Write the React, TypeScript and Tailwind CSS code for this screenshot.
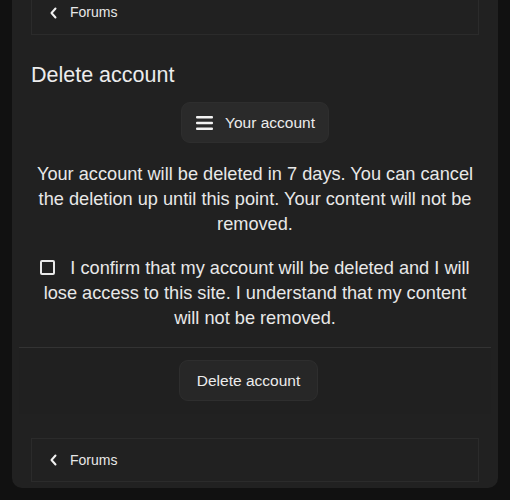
function Chevron() {
  return (
    <svg width="9" height="12" viewBox="0 0 9 12" fill="none" className="shrink-0">
      <path d="M6.5 1.5 2.5 6l4 4.5" stroke="#f2f2f2" strokeWidth="2" strokeLinecap="round" strokeLinejoin="round" />
    </svg>
  );
}

function Crumb({ extra }: { extra: string }) {
  return (
    <div className={"flex h-[44px] items-center gap-[12px] border border-[#2b2b2b] pl-[17px] " + extra}>
      <Chevron />
      <span className="text-[14px] text-[#e8e8e8]">Forums</span>
    </div>
  );
}

export default function App() {
  return (
    <div
      className="h-[500px] w-[510px] overflow-hidden bg-[#111111] px-[12px]"
      style={{ fontFamily: '"Liberation Sans", Arial, sans-serif' }}
    >
      <div className="h-[497px] rounded-b-[10px] bg-[#212121] text-[#e8e8e8]">
        <div className="px-[19px]">
          <Crumb extra="-mt-[9px] border-t-0" />
        </div>

        <h1 className="mt-[27px] px-[19px] text-[21.5px] leading-[26px] text-[#ececec]">Delete account</h1>

        <div className="mt-[14px] flex justify-center">
          <button className="flex h-[41px] items-center gap-[11px] rounded-[9px] border border-[#2e2e2e] bg-[#2a2a2a] pl-[14px] pr-[13px] text-[15.5px] text-[#ececec]">
            <svg width="18" height="14" viewBox="0 0 18 14" className="shrink-0">
              <rect x="0" y="0" width="17" height="2.4" rx="1" fill="#f2f2f2" />
              <rect x="0" y="5.8" width="17" height="2.4" rx="1" fill="#f2f2f2" />
              <rect x="0" y="11.6" width="17" height="2.4" rx="1" fill="#f2f2f2" />
            </svg>
            Your account
          </button>
        </div>

        <p className="mt-[19px] px-[24px] text-center text-[18.2px] leading-[25px] text-[#e8e8e8]">
          Your account will be deleted in 7 days. You can cancel the deletion up until this point. Your content will not be removed.
        </p>

        <label className="mt-[19px] block px-[24px] text-center text-[18.2px] leading-[25px] text-[#e8e8e8]">
          <span className="mr-[15px] inline-block h-[15px] w-[15px] rounded-[2px] border-2 border-[#e8e8e8] align-[-1px]" />
          I confirm that my account will be deleted and I will lose access to this site. I understand that my content will not be removed.
        </label>

        <div className="mx-[7px] mt-[16px] border-t border-[#333333] bg-[#202020] pb-[13px] pt-[12px]">
          <div className="flex justify-center pr-[13px]">
            <button className="h-[41px] rounded-[9px] border border-[#2e2e2e] bg-[#272727] px-[17px] text-[15.5px] text-[#ececec]">
              Delete account
            </button>
          </div>
        </div>

        <div className="mt-[24px] px-[19px]">
          <Crumb extra="" />
        </div>
      </div>
    </div>
  );
}
